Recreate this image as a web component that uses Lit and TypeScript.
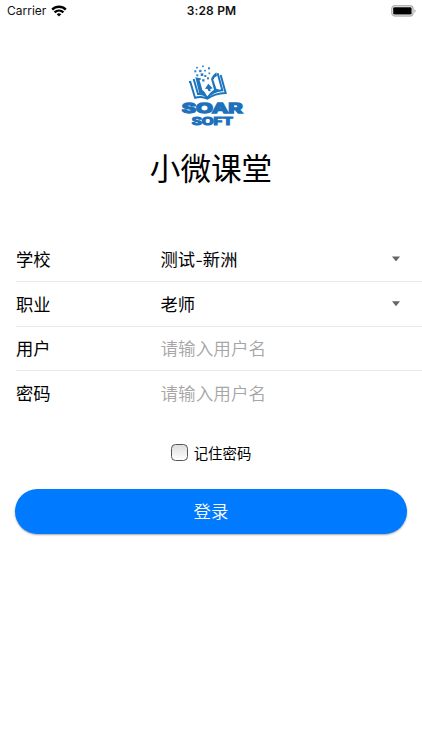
import { LitElement, html, css, svg } from "lit";
import { customElement, property } from "lit/decorators.js";

const SPARKS: [number, number, number][] = [
  [81, 29, 5], [99, 25, 5], [117, 31, 6], [76, 40, 6], [91, 39, 7], [105, 38, 5],
  [118, 46, 5], [82, 52, 6], [96, 50, 8], [106, 54, 6], [89, 63, 6], [114, 61, 6], [100, 67, 7],
];

@customElement("status-bar")
export class StatusBar extends LitElement {
  static styles = css`
    :host { display: grid; grid-template-columns: 1fr auto 1fr; align-items: center; height: 22px; padding: 0 6px 0 7px;
      font: 12px/22px Inter, sans-serif; color: #111; }
    .carrier { display: flex; align-items: center; gap: 4.5px; font-size: 12px; letter-spacing: 0; }
    .time { font-weight: 600; font-size: 12px; letter-spacing: .15px; }
    .battery { justify-self: end; }
    svg { display: block; }
  `;
  render() {
    return html`
      <div class="carrier"><span>Carrier</span>
        <svg width="16" height="12" viewBox="0 0 16 12" fill="none" stroke="#000" stroke-width="2.4">
          <path d="M1.2 4.6C5 .8 11 .8 14.8 4.6"/><path d="M3.6 7.4C6.1 5 9.9 5 12.4 7.4"/>
          <path d="M8 11.6L5.7 9.2Q8 7.4 10.3 9.2Z" fill="#000" stroke="none"/>
        </svg>
      </div>
      <div class="time">3:28 PM</div>
      <svg class="battery" width="25" height="12" viewBox="0 0 25 12">
        <rect x=".8" y=".8" width="21.2" height="10.2" rx="3" fill="#fff" stroke="#b4b4b4" stroke-width="1.4"/>
        <rect x="2.2" y="2.2" width="18.4" height="7.4" rx="1.4" fill="#000"/>
        <path d="M23.4 4v3.8q1.2-.6 1.2-1.9t-1.2-1.9z" fill="#aaa"/>
      </svg>`;
  }
}

@customElement("soar-logo")
export class SoarLogo extends LitElement {
  static styles = css`
    :host { display: block; }
    svg { display: block; }
    text { font-family: Inter, sans-serif; font-weight: 700; fill: #1d70bb; stroke: #1d70bb; }
    .soar { font-size: 41px; stroke-width: 4; }
    .soft { font-size: 29px; stroke-width: 3; }
  `;
  render() {
    return html`
      <svg width="84" height="76" viewBox="0 0 252 228">
        <g fill="#2b80c6">${SPARKS.map(([x, y, s]) => svg`<rect x=${x - s / 2} y=${y - s / 2} width=${s} height=${s}/>`)}</g>
        <g fill="none" stroke="#1d75bf" stroke-width="6">
          <path d="M57 72H61L75 119Q97 114 112 122Q134 106 167 105L152 51"/>
          <path d="M71 63L84 108Q102 107 112 119Q128 100 157 97L143 46"/>
        </g>
        <path fill="#1d75bf" d="M76 58L87 60L97 96Q107 103 112 119Q100 108 88 107Z"/>
        <path fill="#1d75bf" d="M139 43Q129 50 123 62L132 95Q119 102 112 119Q125 103 149 95L139 92L130 65Q132 58 141 54Z"/>
        <path fill="#1d75bf" d="M115 77L128 91L121 93L122 100L115 99L113 93L105 92Z"/>
        <text class="soar" x="35" y="166" textLength="183" lengthAdjust="spacingAndGlyphs">SOAR</text>
        <text class="soft" x="65" y="202" textLength="124" lengthAdjust="spacingAndGlyphs">SOFT</text>
      </svg>`;
  }
}

@customElement("form-row")
export class FormRow extends LitElement {
  @property() label = "";
  @property() value = "";
  @property() hint = "";
  static styles = css`
    :host { display: flex; align-items: center; box-sizing: border-box; height: 44.8px; margin-left: 16px; padding-right: 22px;
      border-bottom: 1px solid #e9e9e9; font-size: 17.3px; line-height: 26px; color: #000; }
    :host(:last-of-type) { border-bottom-color: transparent; }
    .label { width: 144.5px; }
    .value { flex: 1; }
    .dash { display: inline-block; transform: scaleX(1.2); margin: 0 .9px; }
    .hint { flex: 1; color: #a6a6a6; font-weight: 350; font-size: 17.6px; }
    .arrow { width: 8px; height: 5px; background: #666; clip-path: polygon(0 0, 100% 0, 50% 100%); }
  `;
  render() {
    const [head, tail] = this.value.split("-");
    return html`<span class="label">${this.label}</span>
      ${this.value
        ? html`<span class="value">${head}${tail ? html`<span class="dash">-</span>${tail}` : ""}</span><i class="arrow"></i>`
        : html`<span class="hint">${this.hint}</span>`}`;
  }
}

@customElement("app-root")
export class AppRoot extends LitElement {
  static styles = css`
    :host { display: flex; flex-direction: column; height: 750px; background: #fff; overflow: hidden;
      font-family: "Noto Sans CJK SC", sans-serif; color: #000; }
    soar-logo { margin: 36px 0 0 170px; }
    h1 { margin: 10px 0 0; font-weight: 400; font-size: 30.6px; line-height: 46px; text-align: center; }
    .form { margin-top: 47px; }
    .remember { display: flex; align-items: center; justify-content: center; gap: 6px; height: 24px; margin-top: 24.8px; font-size: 14.4px; line-height: 24px; }
    .box { box-sizing: border-box; width: 17px; height: 17px; border: 1.4px solid #555; border-radius: 4.5px; background: linear-gradient(#ddd, #fff); }
    .login { margin: 24px 15.4px 0; height: 45px; border: 0; border-radius: 23px; background: #007aff; color: #fff;
      font: 350 17.4px/44px "Noto Sans CJK SC", sans-serif; padding: 0; box-shadow: 0 1px 2px rgba(0, 0, 0, .35); }
  `;
  render() {
    return html`
      <status-bar></status-bar>
      <soar-logo></soar-logo>
      <h1>小微课堂</h1>
      <div class="form">
        <form-row label="学校" value="测试-新洲"></form-row>
        <form-row label="职业" value="老师"></form-row>
        <form-row label="用户" hint="请输入用户名"></form-row>
        <form-row label="密码" hint="请输入用户名"></form-row>
      </div>
      <label class="remember"><span class="box"></span><span>记住密码</span></label>
      <button class="login">登录</button>`;
  }
}
